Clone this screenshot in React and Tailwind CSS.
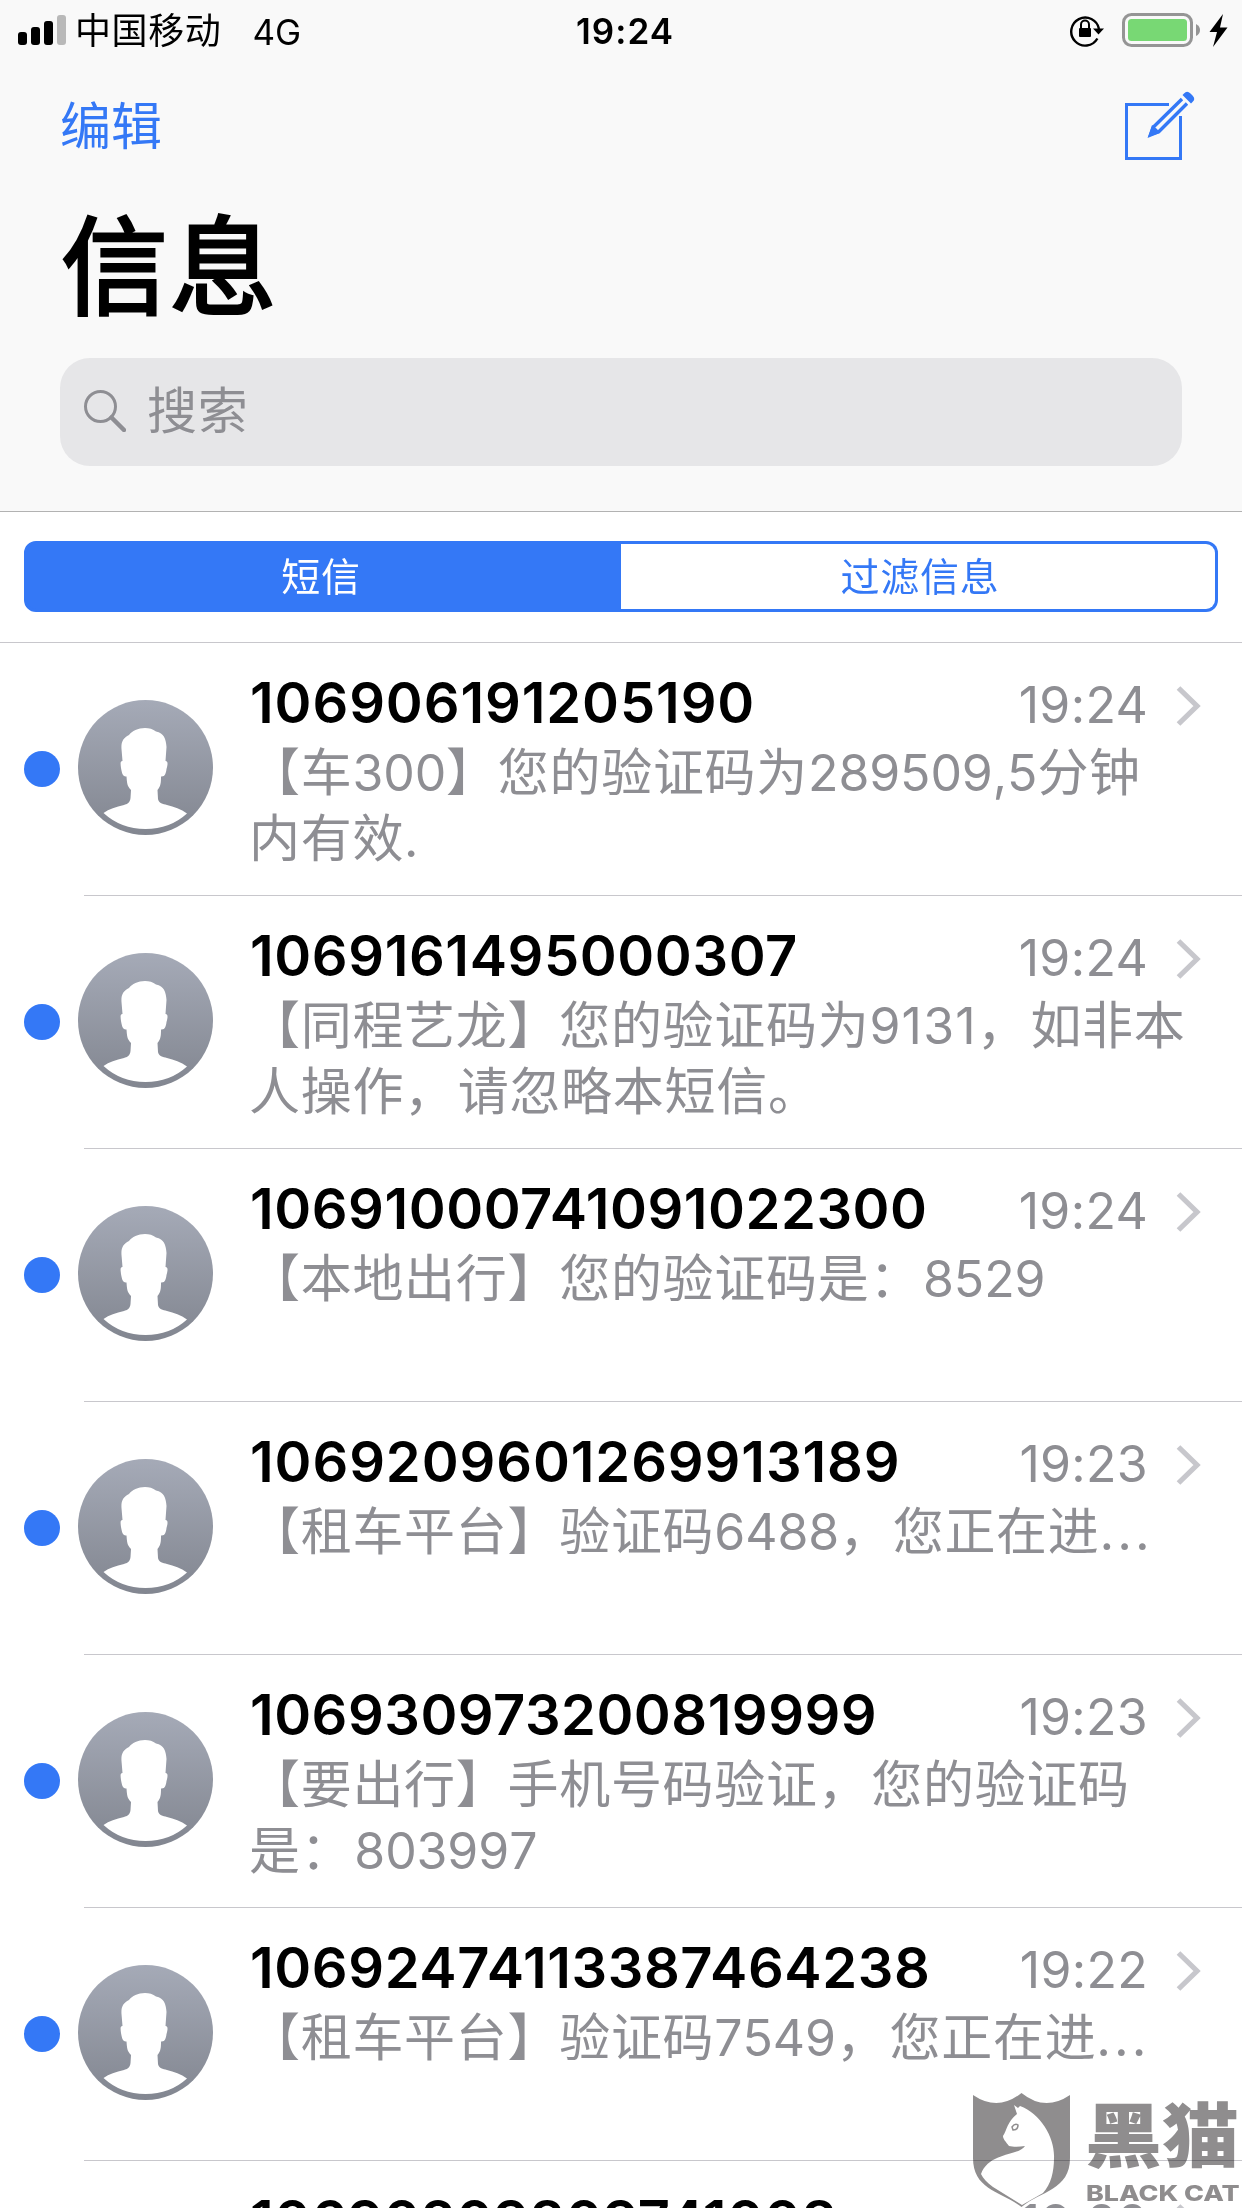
import React from "react";

const messages = [
  {
    sender: "106906191205190",
    time: "19:24",
    tracking: "tracking-[0.9px]",
    lines: ["【车300】您的验证码为289509,5分钟", "内有效."],
  },
  {
    sender: "1069161495000307",
    time: "19:24",
    tracking: "tracking-[0.6px]",
    digits: "tracking-[1.2px]",
    lines: ["【同程艺龙】您的验证码为9131，如非本", "人操作，请忽略本短信。"],
  },
  {
    sender: "10691000741091022300",
    time: "19:24",
    tracking: "tracking-[0.55px]",
    lines: ["【本地出行】您的验证码是：8529"],
  },
  {
    sender: "1069209601269913189",
    time: "19:23",
    tracking: "tracking-[0.9px]",
    lines: ["【租车平台】验证码6488，您正在进..."],
  },
  {
    sender: "106930973200819999",
    time: "19:23",
    tracking: "tracking-[0.5px]",
    lines: ["【要出行】手机号码验证，您的验证码", "是：803997"],
  },
  {
    sender: "10692474113387464238",
    time: "19:22",
    tracking: "tracking-[0.6px]",
    lines: ["【租车平台】验证码7549，您正在进..."],
  },
  {
    sender: "10690209809741008",
    time: "19:22",
    tracking: "tracking-[0.3px]",
    lines: [],
  },
];

const StatusBar = () => (
  <div className="flex h-[60px] items-start justify-between">
    <div className="flex flex-1 pl-[18px]">
      <svg className="mt-[15px] h-[30px] w-12" viewBox="0 0 48 30">
        <rect x="0" y="17" width="9" height="13" rx="3" />
        <rect x="13" y="12" width="9" height="18" rx="3" />
        <rect x="26" y="6" width="9" height="24" rx="3" />
        <rect x="39" y="0" width="9" height="30" rx="3" fill="#b9b9b9" />
      </svg>
      <span className="ml-[9px] mt-[11px] text-[36px] leading-[40px] tracking-[0.6px]">
        中国移动
      </span>
      <span className="ml-[31px] mt-[12px] text-[35px] leading-[40px]">4G</span>
    </div>
    <span className="ml-[4px] mt-[11px] text-[35px] font-semibold leading-[40px] tracking-[1px]">
      19:24
    </span>
    <div className="flex flex-1 justify-end pr-[14px] pt-[13px]">
      {/* Rotation lock */}
      <svg className="mr-px h-[34px] w-[36px]" viewBox="0 0 36 34">
        <path
          d="M27.4 25.5A14 14 0 1 1 29 16"
          fill="none"
          stroke="#000"
          strokeWidth="2.4"
        />
        <path d="M23 15.5h11l-5.500 6z" />
        <path
          d="M11 16v-4.500a4 4 0 0 1 8 0V16"
          fill="none"
          stroke="#000"
          strokeWidth="2"
        />
        <rect x="9" y="15" width="12" height="9" rx="1" />
      </svg>
      {/* Battery */}
      <svg className="ml-[15px] mr-px h-[34px] w-[79px]" viewBox="0 0 79 34">
        <rect
          x="1.500"
          y="1.500"
          width="68"
          height="31"
          rx="8"
          fill="none"
          stroke="#959595"
          strokeWidth="3"
        />
        <rect x="6" y="6" width="59" height="22" rx="3.500" fill="#78d874" />
        <path d="M74 11q4 2 4 6t-4 6z" fill="#959595" />
      </svg>
      <svg className="ml-[7px] mt-px h-[33px] w-[19px]" viewBox="0 0 19 33">
        <path d="M14 0 0.500 18H8L4 33 18.500 13.500H11z" />
      </svg>
    </div>
  </div>
);

const ComposeIcon = () => (
  <svg className="h-[70px] w-[70px]" viewBox="0 0 70 70">
    <path
      d="M44 13.500H1.500V67.500H55.500V25"
      fill="none"
      stroke="#3478f6"
      strokeWidth="3"
    />
    <path
      d="M57 8 28.500 36 25.500 44 34 40.500 62 12.500"
      fill="none"
      stroke="#3478f6"
      strokeWidth="3.400"
    />
    <path d="M27 34 23 46 35 42 32 38z" fill="#3478f6" />
    <path
      d="M59 2.500Q62 -1 65.500 2.500L67.500 4.500Q71 8 67.500 11L66 12.500 57.500 4z"
      fill="#3478f6"
    />
  </svg>
);

const Avatar = () => (
  <svg className="mt-[57px] h-[135px] w-[135px] shrink-0" viewBox="0 0 135 135">
    <defs>
      <linearGradient id="avatar" x1="0" y1="0" x2="0" y2="1">
        <stop offset="0" stopColor="#a5aab7" />
        <stop offset="1" stopColor="#828690" />
      </linearGradient>
    </defs>
    <circle cx="67.500" cy="67.500" r="67.500" fill="url(#avatar)" />
    <path
      d="M67 28C60 28 54 31 51 35C45 38 43 42 43.500 49L44.500 61C42 61 42.500 64 43 68C44 73 44.500 77 48.500 76.500C49 83 49 86 53 90L52.500 98C52 103 49 104 46 105C38 107 31 109 25.500 113Q43 129 67.500 129T109 113.500C103 109 96 107 89 105C85 104 80.500 103 80 99L79.500 90C83 86 83 82 83 76.500C87 77 88 73 88.500 69C90 64 90 61 87.500 61L88.500 47C88 39 86 33 78 31.500C75 29 71 28 67 28z"
      fill="#fff"
    />
  </svg>
);

// Digits, dots and full-width punctuation each get their own spacing
const Preview = ({ text, digits = "tracking-[-0.1px]" }) => (
  <p className="whitespace-nowrap">
    {text.split(/(\.{3}|[，：]|[0-9.,]+)/).map((part, index) => {
      if (index % 2 === 0) return part;
      let style = `text-[50px] [font-kerning:none] ${digits}`;
      if (part === "...") style = "tracking-[3px]";
      if (part === "，" || part === "：") style = "tracking-[2.6px]";
      return (
        <span key={index} className={style}>
          {part}
        </span>
      );
    })}
  </p>
);

const MessageRow = ({ sender, time, lines, tracking, digits }) => (
  <div>
    <div className="flex h-[252px]">
      <div className="ml-6 mt-[108px] h-9 w-9 shrink-0 rounded-full bg-[#3478f6]" />
      <div className="ml-[18px] flex">
        <Avatar />
      </div>
      <div className="ml-[36px] min-w-0 flex-1 pt-[27px]">
        <div className="flex h-[66px] pl-px leading-[66px]">
          <span className={`text-[56px] font-semibold ${tracking}`}>
            {sender}
          </span>
          <span className="ml-auto pt-[2px] text-[50px] tracking-[0.3px] text-[#8e8e93]">
            {time}
          </span>
          <svg
            className="ml-[28px] mr-[41px] mt-[16px] h-[40px] w-[25px]"
            viewBox="0 0 25 40"
          >
            <path
              d="M2.500 2 21 20 2.500 38"
              fill="none"
              stroke="#c7c7cc"
              strokeWidth="5.200"
            />
          </svg>
        </div>
        <div className="mt-[4px] text-[51px] leading-[66px] tracking-[0.7px] text-[#8e8e93]">
          {lines.map((line) => (
            <Preview key={line} text={line} digits={digits} />
          ))}
        </div>
      </div>
    </div>
    <div className="ml-[84px] h-px bg-[#c8c7cc]" />
  </div>
);

const Watermark = () => (
  <div className="absolute bottom-0 right-0 flex h-[116px] w-[269px] mix-blend-multiply">
    <svg className="h-[116px] w-[97px]" viewBox="0 0 97 116">
      <path
        d="M0 3Q25 20 48.500 1Q72 20 97 3V66C97 98 68 99 48.500 115C28 99 0 98 0 66z"
        fill="#8f8d8e"
      />
      <path
        d="M41 13 45 16 47 14C68 22 82 46 81 66C81 80 78 92 70 101L49 113 20 95C14 91 10 86 8 82C16 60 46 64 52 54C46 55 40 55 36 54C33 50 30 47 30 44C34 38 34 30 44 22z"
        fill="#fff"
      />
      <path
        d="M39 35q3-4 6-2q0 5-5 5z"
        fill="none"
        stroke="#8f8d8e"
        strokeWidth="1.500"
      />
    </svg>
    <div className="ml-[16px] w-[156px] text-[#8f8d8e]">
      <div className="-ml-px h-[83px] origin-center scale-y-92 whitespace-nowrap text-[77px] font-black leading-[90px]">
        黑猫
      </div>
      <div className="origin-left scale-x-122 whitespace-nowrap text-[22px] font-extrabold leading-[36px]">
        BLACK CAT
      </div>
    </div>
  </div>
);

const App = () => {
  return (
    <div className="relative h-[2208px] w-[1242px] overflow-hidden bg-white font-['Inter','Noto_Sans_CJK_SC',sans-serif] text-black">
      <header className="h-[512px] border-b border-[#b2b2b2] bg-[#f9f9f9]">
        <StatusBar />
        <div className="flex h-[128px] justify-between pl-[60px] pr-[47px]">
          <span className="mt-[34px] text-[51px] leading-[66px] text-[#3478f6]">
            编辑
          </span>
          <div className="mt-[31px]">
            <ComposeIcon />
          </div>
        </div>
        <h1 className="h-[170px] pl-[61px] pt-[15px] text-[107px] leading-[128px] tracking-[1.5px] [-webkit-text-stroke:3px_#000]">
          信息
        </h1>
        <div className="mx-[60px] flex h-[108px] items-center rounded-[30px] bg-[#e6e6e8] pl-6 text-[#8e8e93]">
          <svg className="-mt-[2px] h-[42px] w-[42px]" viewBox="0 0 42 42">
            <circle
              cx="16.500"
              cy="16.500"
              r="15"
              fill="none"
              stroke="#8e8e93"
              strokeWidth="3"
            />
            <path
              d="M27.500 27.500 40 40"
              stroke="#8e8e93"
              strokeWidth="4.500"
              strokeLinecap="round"
            />
          </svg>
          <span className="-mt-[2px] ml-[21px] text-[50px] leading-[66px] tracking-[0.7px]">
            搜索
          </span>
        </div>
      </header>

      {/* Segmented control */}
      <div className="h-[131px] border-b border-[#c8c7cc] px-6 pt-[29px]">
        <div className="flex h-[71px] text-center text-[39px] leading-[65px] tracking-[0.7px]">
          <div className="w-1/2 rounded-l-[12px] border-[3px] border-[#3478f6] bg-[#3478f6] pr-[3px] text-white">
            短信
          </div>
          <div className="w-1/2 rounded-r-[12px] border-[3px] border-l-0 border-[#3478f6] pl-[4px] text-[#3478f6]">
            过滤信息
          </div>
        </div>
      </div>

      {messages.map((message) => (
        <MessageRow key={message.sender} {...message} />
      ))}

      <Watermark />
    </div>
  );
};

export default App;
